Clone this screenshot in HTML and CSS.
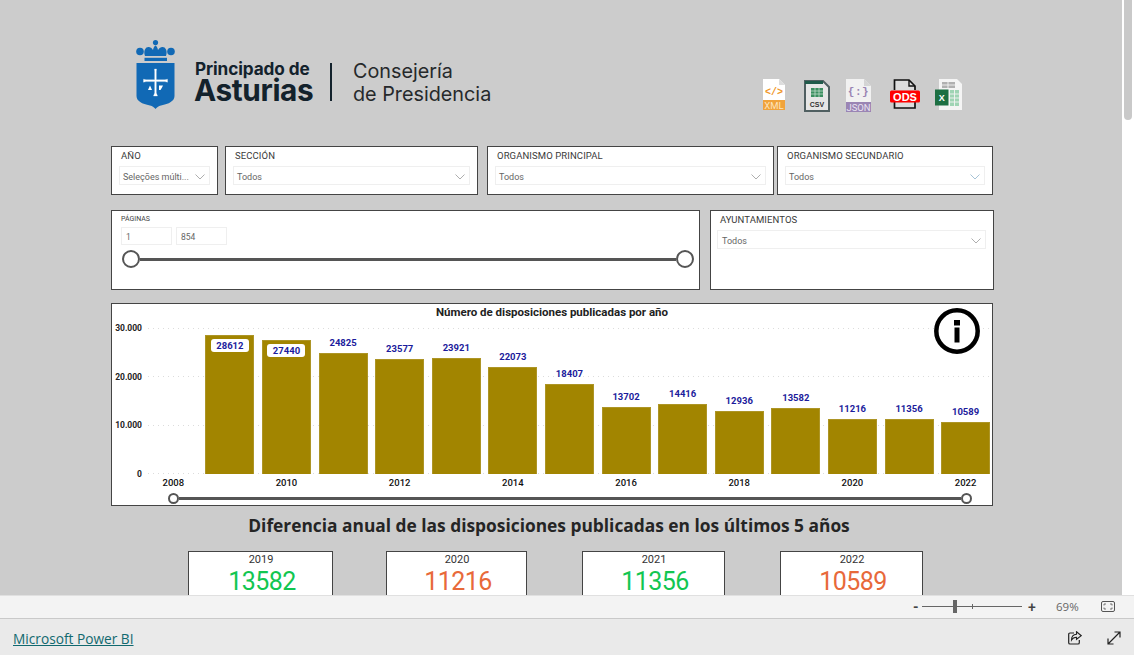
FILE: index.html
```html
<!DOCTYPE html>
<html lang="es">
<head>
<meta charset="utf-8">
<title>Disposiciones publicadas</title>
<link rel="stylesheet" href="styles.css">
</head>
<body>
<main class="viewport">
  <div class="report">
    <header class="header">
      <div class="logo">
        <svg class="shield" width="39" height="69" viewBox="0 0 39 69">
          <circle cx="19.5" cy="2.6" r="2.6" fill="#1169b5"/>
          <circle cx="4" cy="11.5" r="3.8" fill="#1169b5"/>
          <circle cx="35" cy="11.5" r="3.8" fill="#1169b5"/>
          <path d="M9 16C7 10 10 6.500 13 7C15 7.300 16 8.500 17 10C17.500 7.500 18.500 6 19.500 5.500C20.500 6 21.500 7.500 22 10C23 8.500 24 7.300 26 7C29 6.500 32 10 30 16Z" fill="#1169b5"/>
          <rect x="8.500" y="17.800" width="22.500" height="3.200" fill="#1169b5"/>
          <path d="M0.500 23H38.500V56C38.500 61 33 64 25 65.500C22.500 66 20.500 67.500 19.500 69C18.500 67.500 16.500 66 14 65.500C6 64 0.500 61 0.500 56Z" fill="#1169b5"/>
          <path d="M18.500 29H20.500L20.300 31.500V39.800H29L31.500 39.200V42.200L29 41.600H20.300V53L21.500 56H17.500L18.700 53V41.600H10L7.500 42.200V39.200L10 39.800H18.700V31.500Z" fill="#fff" stroke="#fff" stroke-width="0.300"/>
          <path d="M12 50L14 45.500L16 50Z" fill="#fff"/>
          <path d="M23 45.500H27L26 47.500L24.500 50H23Z" fill="#fff"/>
        </svg>
        <div class="brand">
          <div class="brand-top">Principado de</div>
          <div class="brand-main">Asturias</div>
        </div>
        <div class="logo-divider"></div>
        <div class="dept">Consejería<br>de Presidencia</div>
      </div>
      <div class="icons">
        <svg class="icon icon-xml" width="24" height="32" viewBox="0 0 24 32">
          <path d="M1 0H17L23 6V31H1Z" fill="#fff"/>
          <path d="M17 0V6H23Z" fill="#ddd"/>
          <rect x="1" y="21" width="22" height="10" fill="#f1a33b"/>
          <text class="icon-code" x="12" y="16" fill="#f0962a">&lt;/&gt;</text>
          <text class="icon-band" x="12" y="29.500" fill="#fde3bd">XML</text>
        </svg>
        <svg class="icon icon-csv" width="26" height="32" viewBox="0 0 26 32">
          <path d="M1 1H19L25 7V31H1Z" fill="#e6e6e6" stroke="#505f61" stroke-width="2"/>
          <rect x="1" y="1" width="18" height="3" fill="#1f5a4a"/>
          <rect x="7" y="8" width="12" height="9" fill="#3b8f60"/>
          <path d="M11 8V17M15 8V17M7 11H19M7 14H19" stroke="#cfe3d6" stroke-width="0.700"/>
          <text class="icon-csv-label" x="13" y="27" fill="#333">CSV</text>
        </svg>
        <svg class="icon icon-json" width="25" height="33" viewBox="0 0 25 33">
          <path d="M0 0H18L25 7V33H0Z" fill="#f1f1f1"/>
          <path d="M18 0V7H25Z" fill="#d4d4d4"/>
          <rect x="0" y="23" width="25" height="10" fill="#9a85b4"/>
          <text class="icon-json-code" x="12.500" y="16" fill="#9a85b4">{:}</text>
          <text class="icon-band" x="12.500" y="31.500" fill="#e9e2f1">JSON</text>
        </svg>
        <svg class="icon icon-ods" width="30" height="30" viewBox="0 0 30 30">
          <path d="M4.500 11V1H19L25 7V11M4.500 23V29H25V23" fill="#ddd" stroke="#111" stroke-width="1.700"/>
          <path d="M19 1V7H25" fill="none" stroke="#111" stroke-width="1.400"/>
          <rect x="0" y="11.500" width="30" height="12" rx="1.500" fill="#f00"/>
          <text class="icon-ods-label" x="15" y="21.500" fill="#fff">ODS</text>
        </svg>
        <svg class="icon icon-xls" width="27" height="31" viewBox="0 0 27 31">
          <path d="M4 0H22L27 5V31H4Z" fill="#f4f4f4"/>
          <path d="M7 3H20V9H7Z" fill="#b0b0b0"/>
          <path d="M15 11H24V27H15Z" fill="#9fd4b4"/>
          <path d="M15 15H24M15 19H24M15 23H24M19.500 11V27M7 6H20M13 3V9" stroke="#f4f4f4" stroke-width="0.900"/>
          <rect x="0" y="10.500" width="13.500" height="16" fill="#1d6f42"/>
          <text class="icon-x" x="6.700" y="22" fill="#fff">X</text>
        </svg>
      </div>
    </header>

    <section class="row-filters">
      <div class="slicer slicer-year">
        <div class="slicer-label">AÑO</div>
        <div class="dropdown"><span>Seleções múlti...</span><svg class="chev" width="10" height="6" viewBox="0 0 10 6"><path d="M.5.500L5 5L9.500.500" fill="none" stroke="#999" stroke-width=".8"/></svg></div>
      </div>
      <div class="slicer slicer-section">
        <div class="slicer-label">SECCIÓN</div>
        <div class="dropdown"><span>Todos</span><svg class="chev" width="10" height="6" viewBox="0 0 10 6"><path d="M.5.500L5 5L9.500.500" fill="none" stroke="#999" stroke-width=".8"/></svg></div>
      </div>
      <div class="slicer slicer-main">
        <div class="slicer-label">ORGANISMO PRINCIPAL</div>
        <div class="dropdown"><span>Todos</span><svg class="chev" width="10" height="6" viewBox="0 0 10 6"><path d="M.5.500L5 5L9.500.500" fill="none" stroke="#999" stroke-width=".8"/></svg></div>
      </div>
      <div class="slicer slicer-second">
        <div class="slicer-label">ORGANISMO SECUNDARIO</div>
        <div class="dropdown"><span>Todos</span><svg class="chev" width="10" height="6" viewBox="0 0 10 6"><path d="M.5.500L5 5L9.500.500" fill="none" stroke="#8fb4cc" stroke-width=".8"/></svg></div>
      </div>
    </section>

    <section class="row-range">
      <div class="pages">
        <div class="pages-label">PÁGINAS</div>
        <div class="pages-inputs">
          <div class="page-input">1</div>
          <div class="page-input">854</div>
        </div>
        <div class="pages-slider">
          <span class="knob knob-large"></span>
          <span class="track"></span>
          <span class="knob knob-large"></span>
        </div>
      </div>
      <div class="slicer slicer-town">
        <div class="slicer-label">AYUNTAMIENTOS</div>
        <div class="dropdown"><span>Todos</span><svg class="chev" width="10" height="6" viewBox="0 0 10 6"><path d="M.5.500L5 5L9.500.500" fill="none" stroke="#999" stroke-width=".8"/></svg></div>
      </div>
    </section>

    <section class="chart">
      <h2 class="chart-title">Número de disposiciones publicadas por año</h2>
      <svg class="info" width="46" height="46" viewBox="0 0 46 46">
        <circle cx="23" cy="23" r="20.700" fill="#fff" stroke="#000" stroke-width="4.500"/>
        <rect x="20" y="12" width="6" height="5.500" fill="#000"/>
        <rect x="20.500" y="19.500" width="5" height="15" fill="#000"/>
      </svg>
      <div class="chart-main">
        <div class="y-axis">
          <span>30.000</span><span>20.000</span><span>10.000</span><span>0</span>
        </div>
        <div class="plot-col">
          <div class="plot">
            <div class="grid-lines"><i></i><i></i><i></i><i></i></div>
            <div class="slot"></div>
            <div class="slot"><div class="bar" style="--v:28612"><span class="pill">28612</span></div></div>
            <div class="slot"><div class="bar" style="--v:27440"><span class="pill">27440</span></div></div>
            <div class="slot"><span class="val">24825</span><div class="bar" style="--v:24825"></div></div>
            <div class="slot"><span class="val">23577</span><div class="bar" style="--v:23577"></div></div>
            <div class="slot"><span class="val">23921</span><div class="bar" style="--v:23921"></div></div>
            <div class="slot"><span class="val">22073</span><div class="bar" style="--v:22073"></div></div>
            <div class="slot"><span class="val">18407</span><div class="bar" style="--v:18407"></div></div>
            <div class="slot"><span class="val">13702</span><div class="bar" style="--v:13702"></div></div>
            <div class="slot"><span class="val">14416</span><div class="bar" style="--v:14416"></div></div>
            <div class="slot"><span class="val">12936</span><div class="bar" style="--v:12936"></div></div>
            <div class="slot"><span class="val">13582</span><div class="bar" style="--v:13582"></div></div>
            <div class="slot"><span class="val">11216</span><div class="bar" style="--v:11216"></div></div>
            <div class="slot"><span class="val">11356</span><div class="bar" style="--v:11356"></div></div>
            <div class="slot"><span class="val">10589</span><div class="bar" style="--v:10589"></div></div>
          </div>
          <div class="x-axis">
            <span>2008</span><span></span><span>2010</span><span></span><span>2012</span><span></span><span>2014</span><span></span><span>2016</span><span></span><span>2018</span><span></span><span>2020</span><span></span><span>2022</span>
          </div>
        </div>
      </div>
      <div class="chart-slider">
        <span class="knob"></span>
        <span class="track"></span>
        <span class="knob"></span>
      </div>
    </section>

    <h1 class="diff-title">Diferencia anual de las disposiciones publicadas en los últimos 5 años</h1>

    <section class="cards">
      <div class="card card-a"><div class="card-year">2019</div><div class="card-value up">13582</div></div>
      <div class="card card-b"><div class="card-year">2020</div><div class="card-value down">11216</div></div>
      <div class="card card-c"><div class="card-year">2021</div><div class="card-value up">11356</div></div>
      <div class="card card-d"><div class="card-year">2022</div><div class="card-value down">10589</div></div>
    </section>
  </div>
  <div class="scrollbar"><div class="thumb"></div></div>
</main>

<div class="toolbar">
  <span class="zoom-sign">-</span>
  <div class="zoom-slider"><span class="zoom-line"></span><span class="zoom-thumb"></span><span class="zoom-tick"></span></div>
  <span class="zoom-sign zoom-plus">+</span>
  <span class="zoom-value">69%</span>
  <svg class="fit" width="14" height="11" viewBox="0 0 14 11">
    <rect x=".5" y=".5" width="13" height="10" rx="1.500" fill="none" stroke="#555"/>
    <path d="M3 4.500V3H5M9 3H11V4.500M11 6.500V8H9M5 8H3V6.500" fill="none" stroke="#555" stroke-width=".8"/>
  </svg>
</div>

<footer class="footer">
  <a class="pbi-link" href="#">Microsoft Power BI</a>
  <svg class="share" width="14" height="14" viewBox="0 0 14 14">
    <path d="M6 2H2C1.200 2 .7 2.500 .7 3.300V11.700C.7 12.500 1.200 13 2 13H10C10.800 13 11.300 12.500 11.300 11.700V9" fill="none" stroke="#222" stroke-width="1.200"/>
    <path d="M8.500 .8L13.300 4.700L8.500 8.300V6.200C6 6.200 4.500 7.200 3.500 9C3.500 5.800 5.500 3.400 8.500 3.200Z" fill="none" stroke="#222" stroke-width="1.100"/>
  </svg>
  <svg class="expand" width="14" height="14" viewBox="0 0 14 14">
    <path d="M1 13L13 1M7.500 1H13V6.500M1 7.500V13H6.500" fill="none" stroke="#222" stroke-width="1.200"/>
  </svg>
</footer>
</body>
</html>
```

FILE: styles.css
```css
* { box-sizing: border-box; }

html, body { height: 100%; }

body {
  margin: 0;
  display: flex;
  flex-direction: column;
  height: 655px;
  overflow: hidden;
  font-family: Roboto, "Liberation Sans", sans-serif;
  color: #333;
  background: #eaeaea;
}

.viewport {
  display: flex;
  height: 595px;
  flex: none;
  overflow: hidden;
}

.report {
  width: 1122px;
  flex: none;
  background: #ccc;
  padding-left: 111px;
  overflow: hidden;
}

.scrollbar {
  width: 12px;
  background: #fff;
  padding-left: 2px;
}

.thumb {
  width: 8px;
  height: 120px;
  background: #c9c9c9;
  border-radius: 0 0 4px 4px;
}

/* header */
.header {
  display: flex;
  width: 882px;
  height: 146px;
}

.logo {
  display: flex;
  align-items: flex-start;
  margin: 40px 0 0 25px;
  color: #13222c;
}

.shield { flex: none; }

.brand {
  flex: none;
  width: 118px;
  margin: 20px 0 0 19px;
  font-family: Inter, "Liberation Sans", sans-serif;
  font-weight: 700;
  white-space: nowrap;
}

.brand-top {
  font-size: 17.200px;
  line-height: 18px;
  letter-spacing: -0.1px;
  padding-left: 1px;
}

.brand-main {
  font-size: 29.800px;
  line-height: 24px;
  letter-spacing: -0.4px;
}

.logo-divider {
  flex: none;
  width: 2px;
  height: 38px;
  background: #13222c;
  margin: 23px 0 0 18px;
}

.dept {
  flex: none;
  margin: 20px 0 0 21px;
  font-family: Inter, "Liberation Sans", sans-serif;
  font-size: 19.800px;
  line-height: 23px;
  color: #26292b;
  white-space: nowrap;
}

.icons {
  display: flex;
  align-items: flex-start;
  margin: 79px 31px 0 auto;
}

.icon { display: block; flex: none; text-anchor: middle; }
.icon-csv { margin: 1px 0 0 18px; }
.icon-json { margin: 0 0 0 16px; }
.icon-ods { margin: 0 0 0 19px; }
.icon-xls { margin: 0 0 0 15px; }

.icon-code { font: 700 10px "Liberation Mono", monospace; }
.icon-json-code { font: 700 11px "Liberation Mono", monospace; letter-spacing: 0.5px; }
.icon-band { font: 400 9.500px Roboto, sans-serif; }
.icon-csv-label { font: 700 7px "Liberation Sans", sans-serif; }
.icon-ods-label { font: 700 11px "Liberation Sans", sans-serif; }
.icon-x { font: 700 9px "Liberation Sans", sans-serif; }

/* slicers */
.row-filters {
  display: flex;
  width: 883px;
  height: 49px;
}

.slicer {
  flex: none;
  background: #fff;
  border: 1px solid #444;
  padding: 3px 7px 0;
}

.slicer-year { width: 107px; }
.slicer-section { width: 253px; margin-left: 7px; }
.slicer-main { width: 287px; margin-left: 9px; }
.slicer-second { width: 216px; margin-left: 3px; }

.slicer-label {
  font-size: 9.500px;
  line-height: 12px;
  letter-spacing: 0.1px;
  padding-left: 2px;
  color: #3a3a3a;
}

.dropdown {
  display: flex;
  align-items: center;
  justify-content: space-between;
  height: 19px;
  margin-top: 4px;
  padding: 2px 4px 0 3px;
  border: 1px solid #efefef;
  font-size: 9px;
  color: #666;
}

.chev { flex: none; }

/* range row */
.row-range {
  display: flex;
  width: 883px;
  height: 80px;
  margin-top: 15px;
}

.pages {
  width: 589px;
  flex: none;
  background: #fff;
  border: 1px solid #444;
  padding: 4px 5px 0 9px;
}

.pages-label {
  font-size: 7px;
  line-height: 9px;
  color: #444;
}

.pages-inputs {
  display: flex;
  gap: 4px;
  margin-top: 3px;
}

.page-input {
  width: 51px;
  height: 18px;
  padding: 1px 4px 0;
  border: 1px solid #efefef;
  font-size: 8.500px;
  line-height: 16px;
  color: #666;
}

.pages-slider {
  display: flex;
  align-items: center;
  margin: 5px 0 0 1px;
}

.knob {
  flex: none;
  width: 11px;
  height: 11px;
  background: #fff;
  border: 2px solid #555;
  border-radius: 50%;
}

.knob-large { width: 18px; height: 18px; }

.track {
  flex: 1;
  height: 3px;
  background: #555;
}

.slicer-town {
  width: 284px;
  margin-left: 10px;
  padding: 3px 7px 0 6px;
}

.slicer-town .slicer-label { padding-left: 3px; }
.slicer-town .dropdown { padding-left: 4px; }

/* chart */
.chart {
  position: relative;
  width: 882px;
  height: 203px;
  margin-top: 13px;
  background: #fff;
  border: 1px solid #444;
}

.chart-title {
  margin: 0;
  height: 18px;
  padding-top: 1px;
  font-size: 11.500px;
  line-height: 14px;
  font-weight: 700;
  text-align: center;
  color: #222;
}

.info {
  position: absolute;
  z-index: 2;
  top: 4px;
  right: 12px;
}

.chart-main { display: flex; }

.y-axis {
  flex: none;
  width: 33px;
  height: 158px;
  padding-right: 3px;
  display: flex;
  flex-direction: column;
  justify-content: space-between;
  align-items: flex-end;
  font-size: 8.500px;
  line-height: 12px;
  font-weight: 700;
  color: #222;
}

.plot-col {
  width: 845px;
  flex: none;
}

.plot {
  position: relative;
  display: flex;
  height: 152px;
  overflow: hidden;
}

.grid-lines {
  position: absolute;
  top: 6px;
  left: 3px;
  right: 0;
  bottom: 0;
  display: flex;
  flex-direction: column;
  justify-content: space-between;
}

.grid-lines i {
  display: block;
  height: 1px;
  background: repeating-linear-gradient(90deg, #dcdcdc 0 1px, transparent 1px 5px);
}

.slot {
  position: relative;
  flex: none;
  width: 56.600px;
  display: flex;
  flex-direction: column;
  justify-content: flex-end;
  align-items: center;
}

.val {
  margin-bottom: 4px;
  font-size: 9.500px;
  line-height: 12px;
  font-weight: 700;
  color: #1c1c9c;
}

.bar {
  flex: none;
  width: 49px;
  height: calc(var(--v) * 0.004867px);
  background: #a28500;
  border: 1px solid #ad9526;
  border-bottom: 0;
  display: flex;
  justify-content: center;
  align-items: flex-start;
}

.pill {
  width: 38px;
  height: 13px;
  margin-top: 3px;
  background: #fff;
  border-radius: 3px;
  font-size: 9.500px;
  line-height: 13px;
  font-weight: 700;
  text-align: center;
  color: #1c1c9c;
}

.x-axis {
  display: flex;
  height: 16px;
  padding-top: 3px;
  font-size: 9.500px;
  line-height: 12px;
  font-weight: 500;
  color: #111;
}

.x-axis span {
  flex: none;
  width: 56.600px;
  text-align: center;
}

.chart-slider {
  display: flex;
  align-items: center;
  width: 804px;
  margin: 3px 0 0 56px;
}

/* section title + cards */
.diff-title {
  margin: 8px 0 0;
  width: 876px;
  font-family: "Open Sans", "Liberation Sans", sans-serif;
  font-size: 17.350px;
  line-height: 22px;
  font-weight: 700;
  text-align: center;
  color: #252525;
}

.cards {
  display: flex;
  margin-top: 15px;
}

.card {
  flex: none;
  height: 70px;
  padding-top: 1px;
  background: #fff;
  border: 1px solid #444;
  text-align: center;
}

.card-a { width: 145px; margin-left: 77px; }
.card-b { width: 141px; margin-left: 53px; }
.card-c { width: 143px; margin-left: 55px; }
.card-d { width: 143px; margin-left: 55px; }

.card-year {
  padding-left: 1px;
  font-size: 11px;
  line-height: 14px;
  color: #333;
}

.card-value {
  padding-left: 3px;
  font-size: 25px;
  line-height: 30px;
  letter-spacing: -0.6px;
}

.up { color: #12c651; }
.down { color: #e8693a; }

/* toolbar */
.toolbar {
  flex: none;
  display: flex;
  align-items: center;
  height: 24px;
  background: #f3f3f3;
  border-top: 1px solid #e0e0e0;
  border-bottom: 1px solid #c9c9c9;
  padding: 0 0 1px 913px;
  color: #555;
}

.zoom-sign {
  width: 9px;
  font-size: 14px;
  font-weight: 700;
  line-height: 14px;
  color: #444;
}

.zoom-slider {
  position: relative;
  width: 100px;
  height: 13px;
  display: flex;
  align-items: center;
  flex: none;
}

.zoom-line {
  width: 100%;
  height: 1px;
  background: #666;
}

.zoom-thumb {
  position: absolute;
  left: 31px;
  top: 0;
  width: 4px;
  height: 13px;
  background: #666;
}

.zoom-tick {
  position: absolute;
  left: 50px;
  top: 4px;
  width: 1px;
  height: 5px;
  background: #666;
}

.zoom-plus {
  margin-left: 6px;
  width: 12px;
  font-size: 14px;
  font-weight: 500;
}

.zoom-value {
  margin-left: 16px;
  width: 22px;
  font-family: "Open Sans", "Liberation Sans", sans-serif;
  font-size: 11.500px;
  color: #666;
}

.fit {
  margin-left: 23px;
  flex: none;
}

/* footer */
.footer {
  flex: 1;
  display: flex;
  align-items: center;
  padding: 2px 13px 0;
  background: #eaeaea;
}

.pbi-link {
  font-family: "Open Sans", "Liberation Sans", sans-serif;
  font-size: 13.700px;
  color: #11696f;
}

.share { margin-left: auto; flex: none; }
.expand { margin-left: 25px; flex: none; }
```
